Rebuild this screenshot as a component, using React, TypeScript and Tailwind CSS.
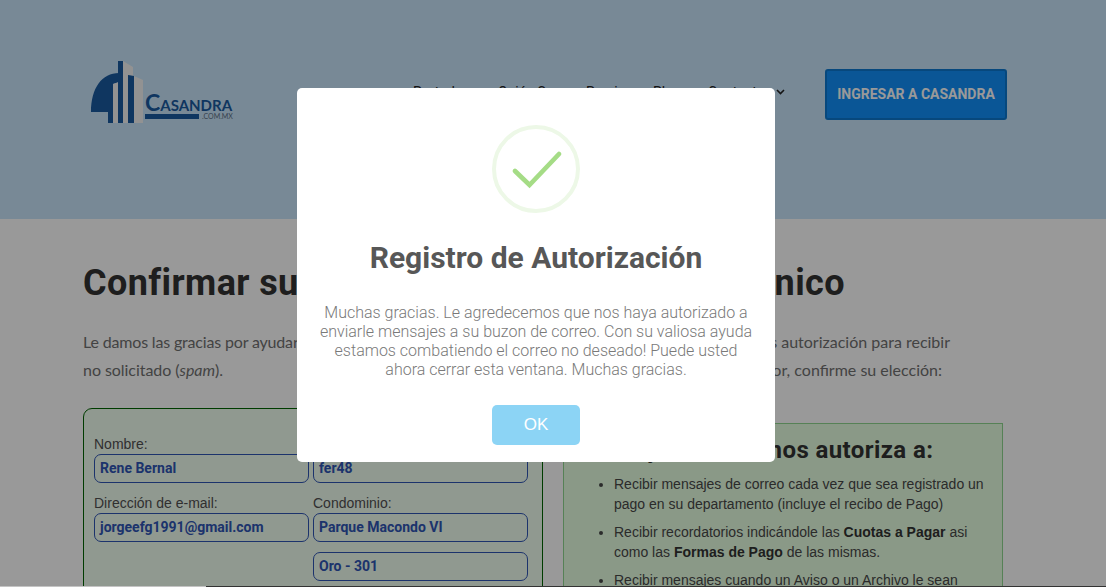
const roboto = "font-['Roboto',sans-serif]";

function Logo() {
  return (
    <div className="flex items-start w-[142px] h-[62px]">
      <svg width="54" height="62" viewBox="91 61 54 62" className="shrink-0">
        <path d="M91 112 C91 88 102 73 119 73 V82 L113 84 V112 H113 V123 H108 V112 Z" fill="#195aa0" />
        <path d="M113 84 L119 82 V123 H113 Z" fill="#f4f4f4" />
        <path d="M118 61 H123 V123 H118 Z" fill="#195aa0" />
        <path d="M123 61 L133 67 V76 L128 75 V123 H123 Z" fill="#f4f4f4" />
        <path d="M128 75 L134 76 V123 H128 Z" fill="#195aa0" />
        <path d="M134 76 L143 80 V123 H134 Z" fill="#f4f4f4" />
      </svg>
      <div className="w-[88px] shrink-0 mt-[31px] text-[#195aa0] font-['Lato',sans-serif]">
        <div className="flex items-baseline h-[20px] leading-[20px] font-bold whitespace-nowrap">
          <span className="text-[23px]">C</span>
          <span className="text-[15px]">ASANDRA</span>
        </div>
        <div className="flex items-center gap-[3px] mt-[1px]">
          <div className="h-[5px] w-[54px] bg-[#195aa0]" />
          <span className="text-[7px] leading-[6px] text-[#5c6f85]">.COM.MX</span>
        </div>
      </div>
    </div>
  );
}

function Field({ label, value }: { label?: string; value: string }) {
  return (
    <div>
      {label && <div className="text-[14px] leading-[16px] mb-[2px] text-[#505050]">{label}</div>}
      <div className={`h-[29px] border border-[#2f55b5] rounded-[7px] px-[5px] leading-[26px] text-[14px] font-bold text-[#2f55b5] ${roboto}`}>
        {value}
      </div>
    </div>
  );
}

export default function App() {
  return (
    <div className="relative h-[587px] overflow-hidden bg-white font-['Liberation_Sans',sans-serif]">
      <header className="h-[219px] bg-[#c8e4fa] pl-[91px] pt-[61px] flex items-start">
        <Logo />
        <nav className={`flex ml-[180px] mt-[19px] text-[14px] leading-[24px] text-[#222] whitespace-nowrap ${roboto}`}>
          <span className="w-[85px]">Portada</span>
          <span className="w-[88px]">Quién Soy</span>
          <span className="w-[67px]">Precios</span>
          <span className="w-[55px]">Plan</span>
          <span className="flex items-center gap-[11px]">
            Contacto
            <svg width="9" height="6" viewBox="0 0 9 6" fill="none" stroke="#222" strokeWidth="1.6">
              <path d="M1 1 L4.5 4.5 L8 1" />
            </svg>
          </span>
        </nav>
        <a className={`ml-auto mr-[99px] mt-[8px] w-[182px] h-[51px] flex items-center justify-center rounded-[3px] border-2 border-[#0c78d0] bg-[#118ffa] text-white text-[14px] font-bold ${roboto}`}>
          INGRESAR A CASANDRA
        </a>
      </header>

      <main className="pl-[83px]">
        <h1 className={`mt-[43px] flex justify-between w-[762px] text-[36px] leading-[43px] font-bold tracking-[0.4px] text-[#333] whitespace-nowrap ${roboto}`}>
          <span>Confirmar su</span>
          <span>dirección de correo electrónico</span>
        </h1>
        <div className="mt-[23px] text-[16px] leading-[28px] text-[#707070] font-['Lato',sans-serif] whitespace-nowrap">
          <p className="flex justify-between w-[867px]">
            <span className="tracking-[-0.17px]">Le damos las gracias por ayudarnos a evitar el correo</span>
            <span>dándonos autorización para recibir</span>
          </p>
          <p className="flex justify-between w-[859px]">
            <span className="tracking-[-0.05px]">
              no solicitado (<em>spam</em>).
            </span>
            <span>Por favor, confirme su elección:</span>
          </p>
        </div>

        <div className="flex items-start gap-[20px]">
          <section className="mt-[24px] w-[460px] h-[220px] border border-[#006400] rounded-[9px] bg-[#f0fff0] pl-[10px] pt-[27px]">
            <div className="grid grid-cols-[215px_215px] gap-x-[4px]">
              <Field label="Nombre:" value="Rene Bernal" />
              <Field label="Usuario:" value="fer48" />
              <div className="mt-[12px]">
                <Field label="Dirección de e-mail:" value="jorgeefg1991@gmail.com" />
              </div>
              <div className="mt-[12px]">
                <Field label="Condominio:" value="Parque Macondo VI" />
              </div>
              <div />
              <div className="mt-[10px]">
                <Field value="Oro - 301" />
              </div>
            </div>
          </section>

          <section className="mt-[39px] w-[440px] h-[220px] border border-[#90d890] bg-[#e6ffe1] pt-[12px]">
            <h2 className={`pl-[67px] text-[24px] leading-[29px] font-bold tracking-[0.4px] text-[#333] whitespace-nowrap ${roboto}`}>
              Ayudándole nos autoriza a:
            </h2>
            <ul className="mt-[9px] pl-[50px] pr-[16px] list-disc text-[14px] leading-[20px] text-[#484848] space-y-[8px]">
              <li>Recibir mensajes de correo cada vez que sea registrado un pago en su departamento (incluye el recibo de Pago)</li>
              <li>
                Recibir recordatorios indicándole las <b className="text-[#333]">Cuotas a Pagar</b> asi como las{" "}
                <b className="text-[#333]">Formas de Pago</b> de las mismas.
              </li>
              <li>Recibir mensajes cuando un Aviso o un Archivo le sean enviados.</li>
            </ul>
          </section>
        </div>
      </main>

      {/* overlay + modal */}
      <div className="absolute inset-0 bg-black/40" />
      <div className="absolute inset-0 pl-[297px] pt-[88px]">
        <div className={`w-[478px] h-[374px] bg-white rounded-[5px] text-center flex flex-col items-center ${roboto}`}>
          <div className="relative mt-[37px] w-[88px] h-[88px] rounded-full border-4 border-[#edf8e7]">
            <svg width="88" height="88" viewBox="0 0 88 88" fill="none" className="absolute -left-[4px] -top-[4px]">
              <path d="M23 46 L37.5 60 L67 29" stroke="#a5dc86" strokeWidth="4.7" strokeLinecap="round" strokeLinejoin="miter" />
            </svg>
          </div>
          <h2 className="mt-[24px] text-[30px] leading-[41px] font-bold text-[#575757]">Registro de Autorización</h2>
          <p className="mt-[25px] w-[440px] text-[16px] leading-[19px] font-light text-[#797979]">
            Muchas gracias. Le agredecemos que nos haya autorizado a enviarle mensajes a su buzon de correo. Con su valiosa ayuda estamos combatiendo el correo no deseado! Puede usted ahora cerrar esta ventana. Muchas gracias.
          </p>
          <button className="mt-[26px] w-[88px] h-[40px] rounded-[5px] bg-[#8cd4f5] text-white text-[17px] font-['Liberation_Sans',sans-serif]">
            OK
          </button>
        </div>
      </div>

      <div className="absolute bottom-0 inset-x-0 h-px flex bg-[#333]">
        <div className="w-[206px] bg-[#c4c4c4]" />
      </div>
    </div>
  );
}
